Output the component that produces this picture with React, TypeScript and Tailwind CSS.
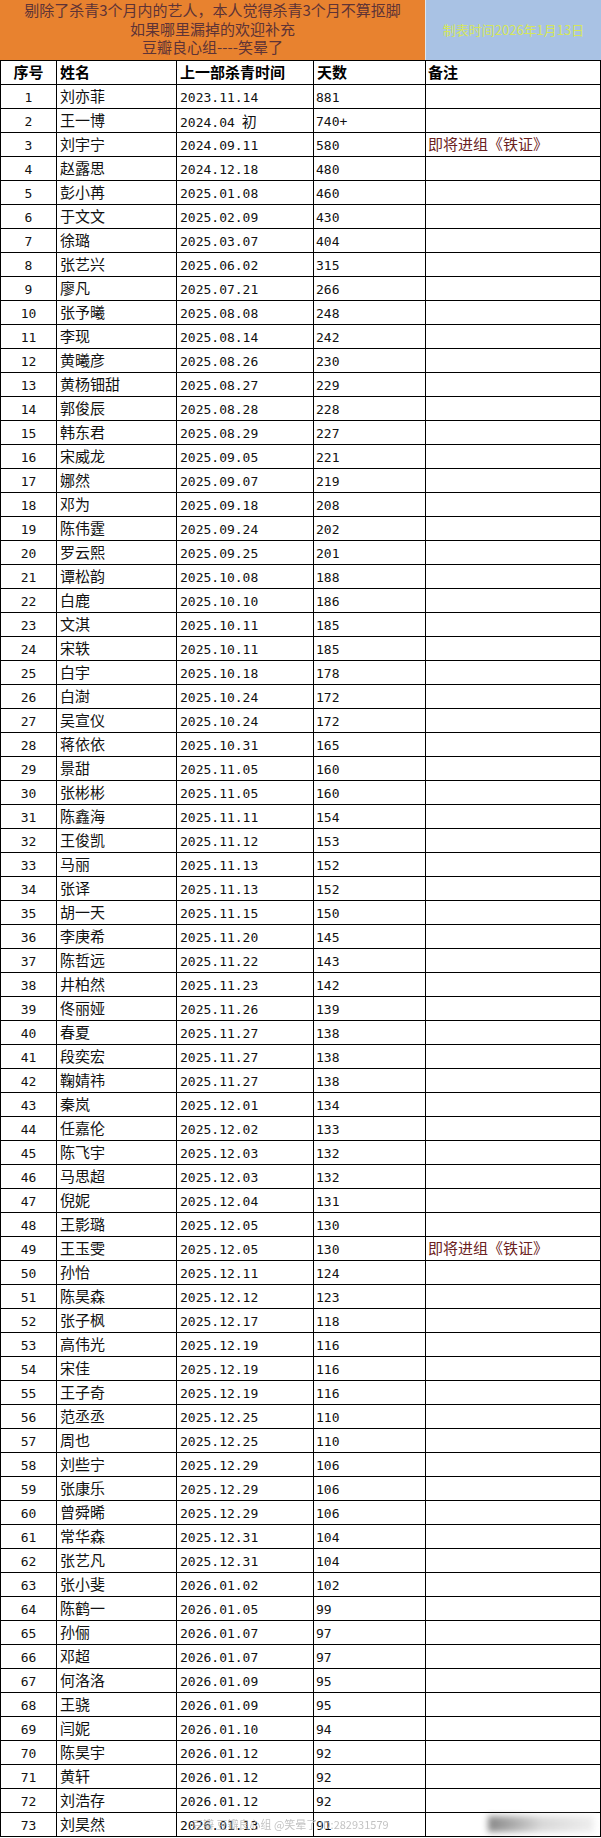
const rows: [string, string, string, string?][] = [
  ['刘亦菲', '2023.11.14', '881'],
  ['王一博', '2024.04 初', '740+'],
  ['刘宇宁', '2024.09.11', '580', '即将进组《铁证》'],
  ['赵露思', '2024.12.18', '480'],
  ['彭小苒', '2025.01.08', '460'],
  ['于文文', '2025.02.09', '430'],
  ['徐璐', '2025.03.07', '404'],
  ['张艺兴', '2025.06.02', '315'],
  ['廖凡', '2025.07.21', '266'],
  ['张予曦', '2025.08.08', '248'],
  ['李现', '2025.08.14', '242'],
  ['黄曦彦', '2025.08.26', '230'],
  ['黄杨钿甜', '2025.08.27', '229'],
  ['郭俊辰', '2025.08.28', '228'],
  ['韩东君', '2025.08.29', '227'],
  ['宋威龙', '2025.09.05', '221'],
  ['娜然', '2025.09.07', '219'],
  ['邓为', '2025.09.18', '208'],
  ['陈伟霆', '2025.09.24', '202'],
  ['罗云熙', '2025.09.25', '201'],
  ['谭松韵', '2025.10.08', '188'],
  ['白鹿', '2025.10.10', '186'],
  ['文淇', '2025.10.11', '185'],
  ['宋轶', '2025.10.11', '185'],
  ['白宇', '2025.10.18', '178'],
  ['白澍', '2025.10.24', '172'],
  ['吴宣仪', '2025.10.24', '172'],
  ['蒋依依', '2025.10.31', '165'],
  ['景甜', '2025.11.05', '160'],
  ['张彬彬', '2025.11.05', '160'],
  ['陈鑫海', '2025.11.11', '154'],
  ['王俊凯', '2025.11.12', '153'],
  ['马丽', '2025.11.13', '152'],
  ['张译', '2025.11.13', '152'],
  ['胡一天', '2025.11.15', '150'],
  ['李庚希', '2025.11.20', '145'],
  ['陈哲远', '2025.11.22', '143'],
  ['井柏然', '2025.11.23', '142'],
  ['佟丽娅', '2025.11.26', '139'],
  ['春夏', '2025.11.27', '138'],
  ['段奕宏', '2025.11.27', '138'],
  ['鞠婧祎', '2025.11.27', '138'],
  ['秦岚', '2025.12.01', '134'],
  ['任嘉伦', '2025.12.02', '133'],
  ['陈飞宇', '2025.12.03', '132'],
  ['马思超', '2025.12.03', '132'],
  ['倪妮', '2025.12.04', '131'],
  ['王影璐', '2025.12.05', '130'],
  ['王玉雯', '2025.12.05', '130', '即将进组《铁证》'],
  ['孙怡', '2025.12.11', '124'],
  ['陈昊森', '2025.12.12', '123'],
  ['张子枫', '2025.12.17', '118'],
  ['高伟光', '2025.12.19', '116'],
  ['宋佳', '2025.12.19', '116'],
  ['王子奇', '2025.12.19', '116'],
  ['范丞丞', '2025.12.25', '110'],
  ['周也', '2025.12.25', '110'],
  ['刘些宁', '2025.12.29', '106'],
  ['张康乐', '2025.12.29', '106'],
  ['曾舜晞', '2025.12.29', '106'],
  ['常华森', '2025.12.31', '104'],
  ['张艺凡', '2025.12.31', '104'],
  ['张小斐', '2026.01.02', '102'],
  ['陈鹤一', '2026.01.05', '99'],
  ['孙俪', '2026.01.07', '97'],
  ['邓超', '2026.01.07', '97'],
  ['何洛洛', '2026.01.09', '95'],
  ['王骁', '2026.01.09', '95'],
  ['闫妮', '2026.01.10', '94'],
  ['陈昊宇', '2026.01.12', '92'],
  ['黄轩', '2026.01.12', '92'],
  ['刘浩存', '2026.01.12', '92'],
  ['刘昊然', '2026.01.13', '91'],
];

const cjk = "font-['Noto_Sans_CJK_SC',sans-serif]";
const mono = "font-['DejaVu_Sans_Mono','Noto_Sans_CJK_SC',monospace]";
const rowGrid = 'grid grid-cols-[56px_120px_137px_112px_175px] h-[24px] border-l border-b border-black';
const cell = 'border-r border-black flex items-center overflow-hidden whitespace-nowrap';

function DateText({ value }: { value: string }) {
  // "2024.04 初" mixes a CJK glyph that should keep the larger size
  const [num, rest] = value.split(' ');
  return (
    <span className={`${mono} text-[13px]`}>
      {num}
      {rest && <span className={`${cjk} text-[15px] ml-[7px]`}>{rest}</span>}
    </span>
  );
}

export default function App() {
  return (
    <div className={`w-[601px] h-[1838px] bg-white text-[#111] ${cjk}`}>
      <div className="flex h-[61px] border-b border-black">
        <div className="w-[425px] bg-[#e8822f] flex flex-col items-center justify-center text-[15px] leading-[18.5px] text-[#5e3336] pb-[2px]">
          <p>剔除了杀青3个月内的艺人，本人觉得杀青3个月不算抠脚</p>
          <p>如果哪里漏掉的欢迎补充</p>
          <p>豆瓣良心组----笑晕了</p>
        </div>
        <div className="flex-1 bg-[#a9c2e4] border-l border-[#dfe6ee] flex items-center justify-center text-[13px] text-[#d5e65c]">
          制表时间2026年1月13日
        </div>
      </div>

      <div className={`${rowGrid} font-bold text-[15px] text-black`}>
        <div className={`${cell} justify-center`}>序号</div>
        <div className={`${cell} pl-[3px]`}>姓名</div>
        <div className={`${cell} pl-[3px]`}>上一部杀青时间</div>
        <div className={`${cell} pl-[3px]`}>天数</div>
        <div className={`${cell} pl-[2px]`}>备注</div>
      </div>

      <div className="relative">
        {rows.map(([name, date, days, note], i) => (
          <div key={i} className={rowGrid}>
            <div className={`${cell} justify-center ${mono} text-[13px] pt-[2px]`}>{i + 1}</div>
            <div className={`${cell} pl-[3px] text-[15px]`}>{name}</div>
            <div className={`${cell} pl-[3px] pt-[2px]`}>
              <DateText value={date} />
            </div>
            <div className={`${cell} pl-[2px] pt-[2px] ${mono} text-[13px]`}>{days}</div>
            <div className={`${cell} pl-[2px] text-[15px] text-[#6b2121]`}>{note}</div>
          </div>
        ))}

        {/* watermark smeared over the last row */}
        <div className="absolute left-[192px] bottom-[5px] text-[11px] text-[#b4b4b4] opacity-80 whitespace-nowrap pointer-events-none blur-[0.4px]">
          豆瓣 豆瓣良心组 @笑晕了 ID:282931579
        </div>
        <div className="absolute left-[488px] bottom-[5px] w-[106px] h-[16px] bg-gradient-to-r from-[#555] via-[#c8c8c8] to-[#e8e8e8] blur-[3px] opacity-70 pointer-events-none" />
      </div>
    </div>
  );
}
